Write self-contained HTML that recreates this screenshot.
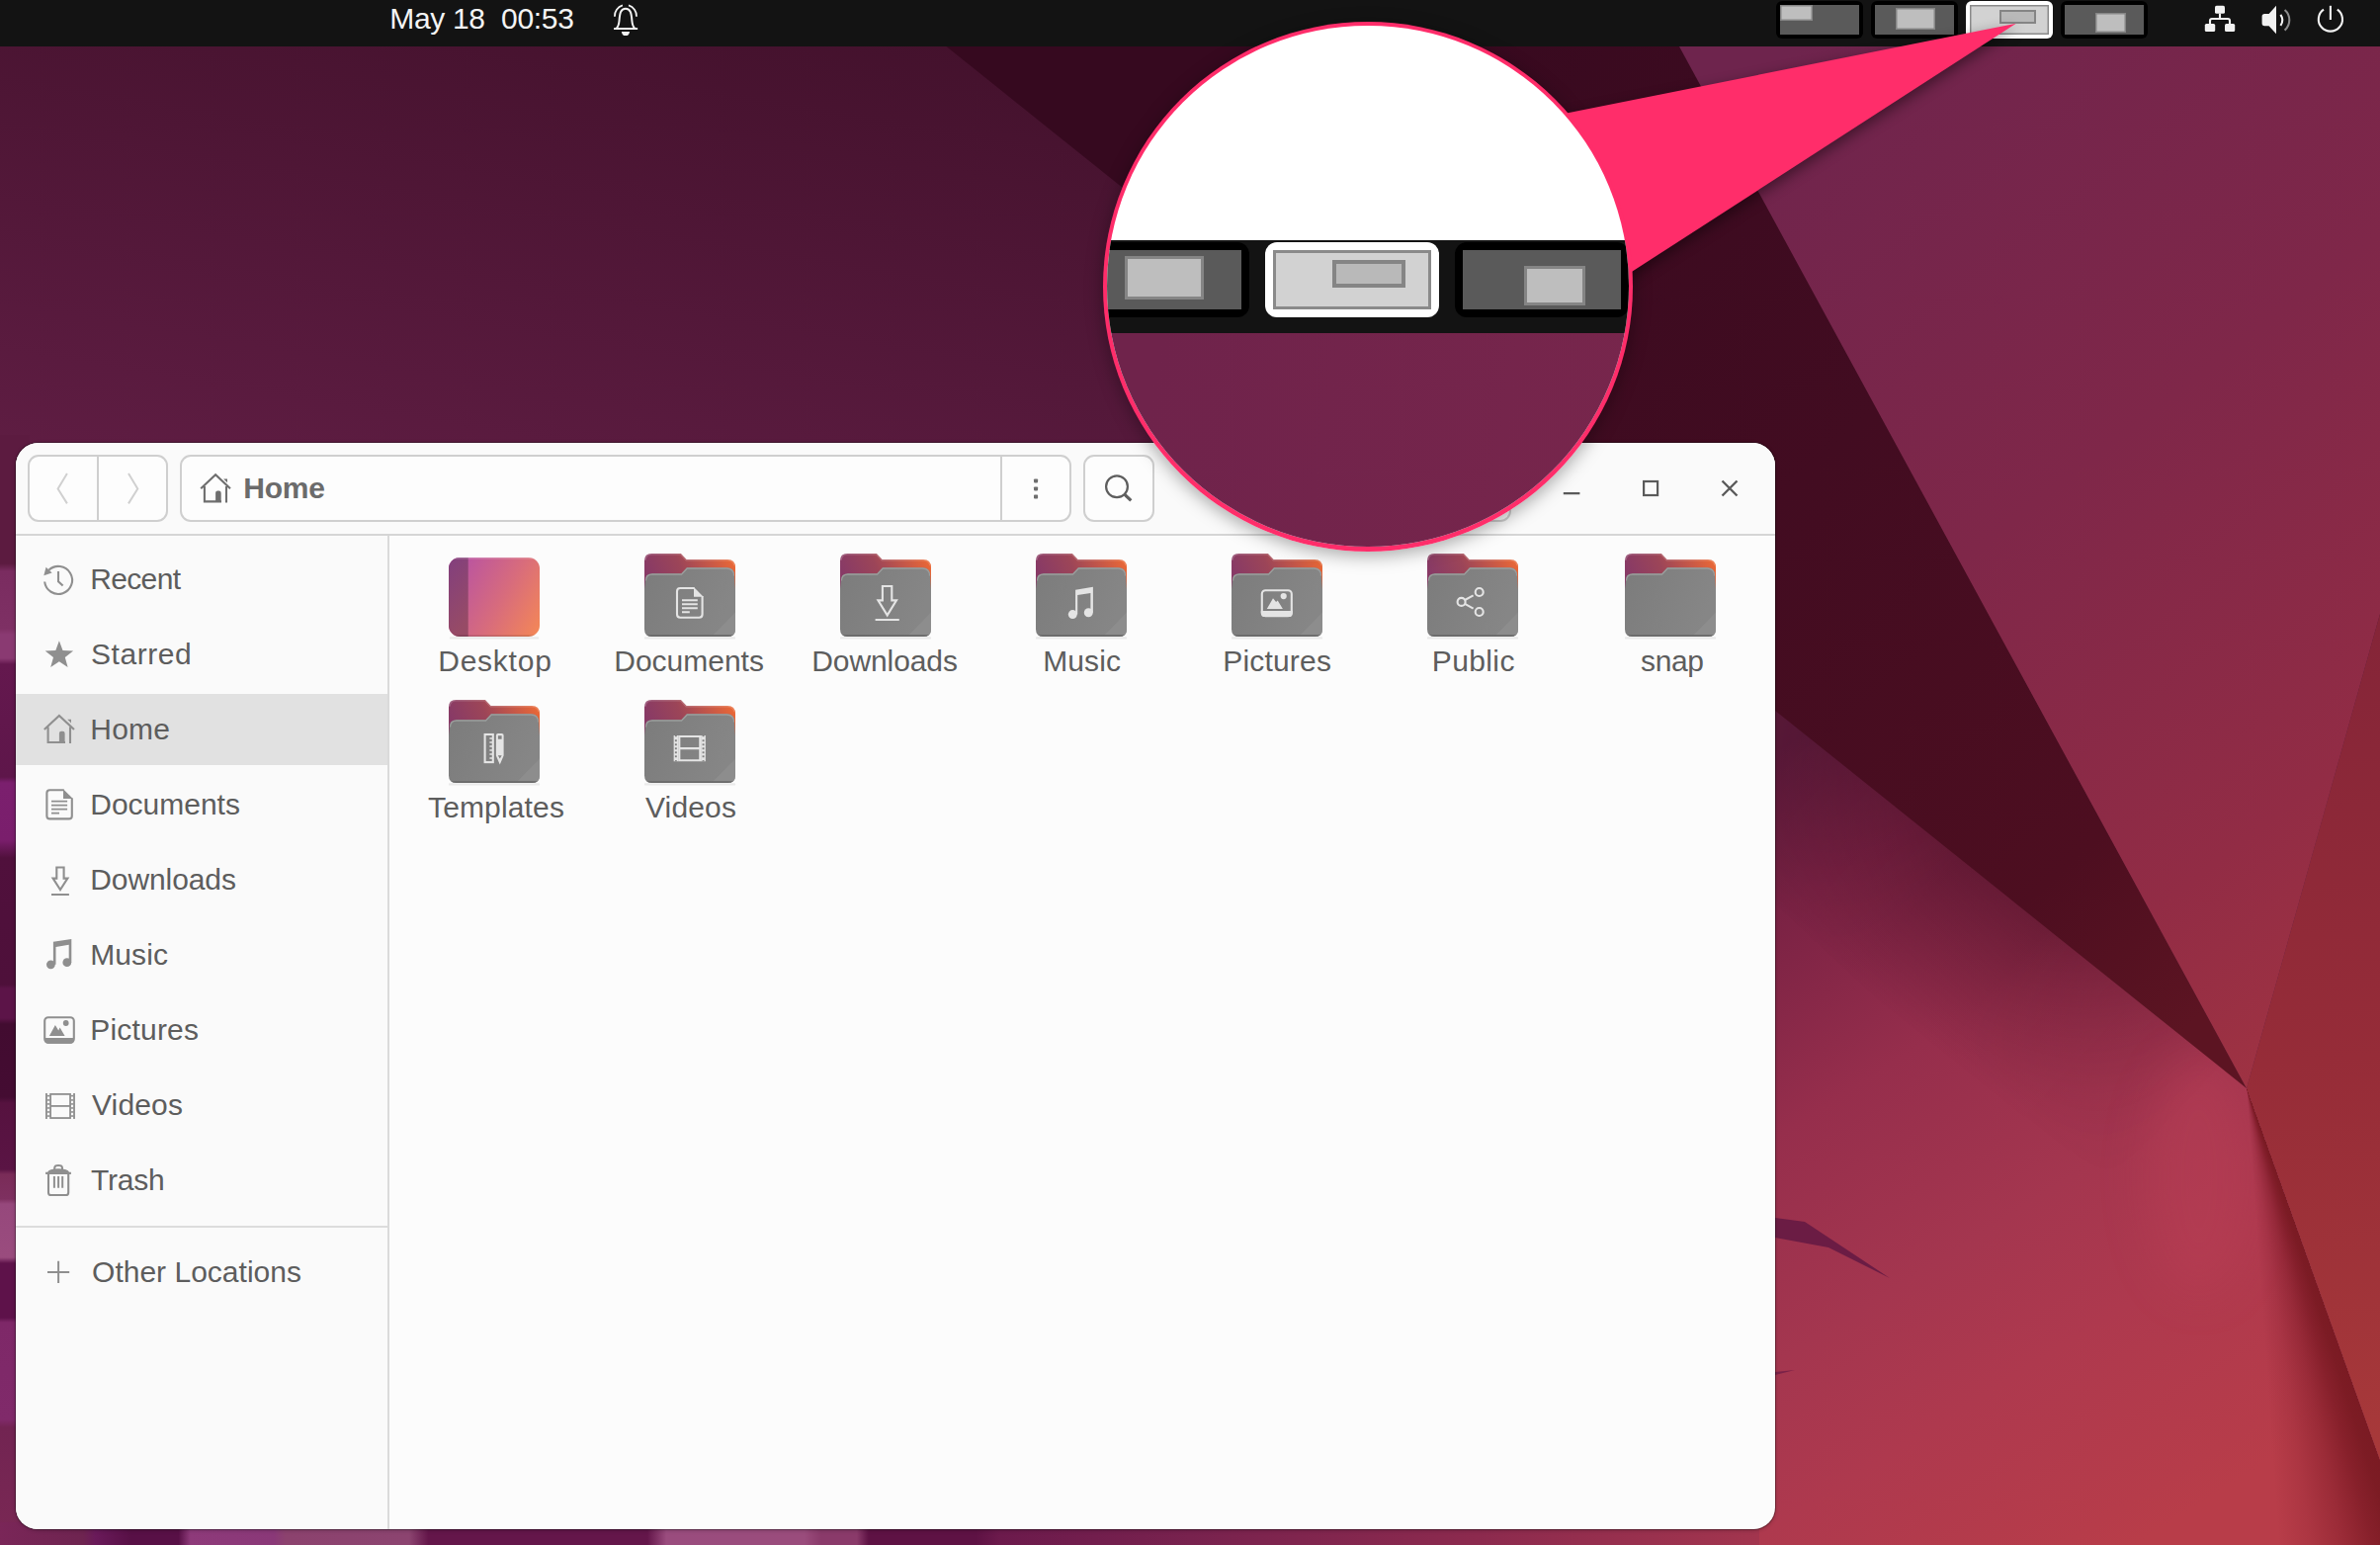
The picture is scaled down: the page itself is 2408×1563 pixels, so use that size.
<!DOCTYPE html>
<html><head><meta charset="utf-8"><title>Files - Home</title>
<style>
html,body{margin:0;padding:0}
body{width:2408px;height:1563px;position:relative;overflow:hidden;background:#4a1433;font-family:'Liberation Sans',sans-serif}
.abs{position:absolute;display:block}
.t{position:absolute;white-space:pre;line-height:1;font-family:'Liberation Sans',sans-serif}
#topbar{position:absolute;left:0;top:0;width:2408px;height:47px;background:#131313}
.ws{position:absolute;top:1px;width:87.7px;height:38px;border-radius:6px}
.wsi{position:absolute;left:3.9px;top:4px;width:80px;height:30px}
.wsw{position:absolute}
#win{position:absolute;left:16px;top:447.5px;width:1780px;height:1099.5px;border-radius:23px 23px 22px 22px;background:#fcfcfc;overflow:hidden;box-shadow:0 0 0 1px rgba(0,0,0,0.28),0 1px 4px rgba(0,0,0,0.25)}
#hdr{position:absolute;left:0;top:0;width:1780px;height:92.5px;background:#fafafa;border-bottom:2px solid #d5d5d5}
#side{position:absolute;left:0;top:94.5px;width:376px;height:1005px;background:#fafafa;border-right:2px solid #dadada}
.btn{position:absolute;box-sizing:border-box;border:2px solid #cfcfcf;border-radius:11px;background:#fdfdfd}
</style></head>
<body>

<svg class="abs" style="left:0;top:0" width="2408" height="1563" viewBox="0 0 2408 1563">
 <defs>
  <linearGradient id="w0" gradientUnits="userSpaceOnUse" x1="1100" y1="47" x2="1003" y2="627"><stop offset="0" stop-color="#43112c"/><stop offset="1" stop-color="#5f1d43"/></linearGradient>
  <linearGradient id="wdark" gradientUnits="userSpaceOnUse" x1="1300" y1="47" x2="2200" y2="1050"><stop offset="0" stop-color="#36091f"/><stop offset="0.5" stop-color="#420c21"/><stop offset="0.85" stop-color="#4d0e20"/><stop offset="1" stop-color="#5c1422"/></linearGradient>
  <linearGradient id="wlp" gradientUnits="userSpaceOnUse" x1="1750" y1="100" x2="2450" y2="1000"><stop offset="0" stop-color="#6e244d"/><stop offset="0.45" stop-color="#7f2749"/><stop offset="0.8" stop-color="#922c45"/><stop offset="1" stop-color="#a03342"/></linearGradient>
  <linearGradient id="wr" gradientUnits="userSpaceOnUse" x1="2340" y1="640" x2="2408" y2="1500"><stop offset="0" stop-color="#852538"/><stop offset="0.5" stop-color="#962c38"/><stop offset="1" stop-color="#a93a3a"/></linearGradient>
  <linearGradient id="wlow" gradientUnits="userSpaceOnUse" x1="1796" y1="760" x2="2260" y2="1500"><stop offset="0" stop-color="#5a1a3a"/><stop offset="0.16" stop-color="#7a2244"/><stop offset="0.378" stop-color="#962e4c"/><stop offset="0.6" stop-color="#a4364f"/><stop offset="0.76" stop-color="#ae394e"/><stop offset="0.956" stop-color="#b63c4a"/><stop offset="1" stop-color="#b83d49"/></linearGradient>
  <linearGradient id="wband" gradientUnits="userSpaceOnUse" x1="2290" y1="1400" x2="2400" y2="1370"><stop offset="0" stop-color="#7c1c24" stop-opacity="0"/><stop offset="1" stop-color="#7a1b23" stop-opacity="1"/></linearGradient>
  <linearGradient id="wleft" gradientUnits="userSpaceOnUse" x1="0" y1="440" x2="0" y2="1563"><stop offset="0.0000" stop-color="#5c1b40"/><stop offset="0.1158" stop-color="#5c1b40"/><stop offset="0.1229" stop-color="#7a2c60"/><stop offset="0.1745" stop-color="#7e3064"/><stop offset="0.1799" stop-color="#8a3a72"/><stop offset="0.2012" stop-color="#8a3a72"/><stop offset="0.2066" stop-color="#64184e"/><stop offset="0.3081" stop-color="#5e164a"/><stop offset="0.3134" stop-color="#7b1f6e"/><stop offset="0.3651" stop-color="#7a1e6c"/><stop offset="0.3811" stop-color="#50103c"/><stop offset="0.4951" stop-color="#4e103a"/><stop offset="0.4987" stop-color="#5c1448"/><stop offset="0.5254" stop-color="#5c1448"/><stop offset="0.5307" stop-color="#420c30"/><stop offset="0.5966" stop-color="#440c32"/><stop offset="0.6020" stop-color="#56123f"/><stop offset="0.6616" stop-color="#5a1444"/><stop offset="0.6661" stop-color="#7a2c58"/><stop offset="0.6883" stop-color="#7e3060"/><stop offset="0.6928" stop-color="#96487c"/><stop offset="0.7409" stop-color="#9a4c7e"/><stop offset="0.7462" stop-color="#5e124a"/><stop offset="0.7952" stop-color="#5e124a"/><stop offset="0.7996" stop-color="#7e2868"/><stop offset="0.8869" stop-color="#802a6a"/><stop offset="0.8940" stop-color="#722452"/><stop offset="1.0000" stop-color="#7a2854"/></linearGradient>
  <linearGradient id="wbot" gradientUnits="userSpaceOnUse" x1="0" y1="0" x2="2408" y2="0">
   <stop offset="0" stop-color="#7a2658"/><stop offset="0.035" stop-color="#6e2450"/><stop offset="0.04" stop-color="#6a1a5a"/><stop offset="0.055" stop-color="#581046"/><stop offset="0.075" stop-color="#581046"/><stop offset="0.08" stop-color="#8e3a7a"/><stop offset="0.115" stop-color="#8a3878"/><stop offset="0.12" stop-color="#8c426e"/><stop offset="0.172" stop-color="#8c4470"/><stop offset="0.18" stop-color="#64164a"/><stop offset="0.272" stop-color="#64164a"/><stop offset="0.28" stop-color="#9a4c7e"/><stop offset="0.338" stop-color="#9a4c7c"/><stop offset="0.345" stop-color="#8a3a6a"/><stop offset="0.36" stop-color="#8a3a6a"/><stop offset="0.365" stop-color="#5e1244"/><stop offset="0.41" stop-color="#5e1244"/><stop offset="0.42" stop-color="#6c1a4c"/><stop offset="0.5" stop-color="#78224e"/><stop offset="0.62" stop-color="#8c2a4e"/><stop offset="0.75" stop-color="#a4364e"/><stop offset="0.83" stop-color="#b23c4c"/><stop offset="0.89" stop-color="#be4248"/><stop offset="0.945" stop-color="#b03838"/><stop offset="0.975" stop-color="#8a2228"/><stop offset="1" stop-color="#7a1c22"/></linearGradient>
  <linearGradient id="wfold" gradientUnits="userSpaceOnUse" x1="2026" y1="870" x2="1907.25" y2="1018.2"><stop offset="0" stop-color="#3c0a1e" stop-opacity="0.5"/><stop offset="1" stop-color="#3c0a1e" stop-opacity="0"/></linearGradient>
  <linearGradient id="gmf" gradientUnits="userSpaceOnUse" x1="1780" y1="640" x2="2273" y2="1101"><stop offset="0" stop-color="#222"/><stop offset="0.12" stop-color="#444"/><stop offset="0.45" stop-color="#fff"/><stop offset="0.62" stop-color="#fff"/><stop offset="0.95" stop-color="#000"/></linearGradient>
  <mask id="mfold" maskUnits="userSpaceOnUse" x="1600" y="600" width="808" height="700"><rect x="1600" y="600" width="808" height="700" fill="url(#gmf)"/></mask>
  <clipPath id="cliplow"><polygon points="1780,640 2273,1101 2408,1477 2408,1563 1780,1563"/></clipPath>
  <filter id="blur8" x="-50%" y="-50%" width="200%" height="200%"><feGaussianBlur stdDeviation="5"/></filter>
  <filter id="blur20" x="-150%" y="-100%" width="400%" height="300%"><feGaussianBlur stdDeviation="22"/></filter>
 </defs>
 <rect x="0" y="0" width="2408" height="1563" fill="url(#w0)"/>
 <rect x="0" y="440" width="30" height="1123" fill="url(#wleft)"/>
 <!-- bottom strip (under window) -->
 <rect x="0" y="1540" width="1830" height="23" fill="url(#wbot)"/>
 <!-- lower right region -->
 <polygon points="1780,640 2273,1101 2408,1477 2408,1563 1780,1563" fill="url(#wlow)"/>
 <polygon points="1780,640 2273,1101 2154.25,1249.2 1661.25,788.2" fill="url(#wfold)" mask="url(#mfold)"/>
 <ellipse cx="2225" cy="1190" rx="55" ry="120" fill="#bc4056" opacity="0.4" filter="url(#blur20)"/>
 <!-- dark triangle -->
 <polygon points="930,25 1685,20 2273,1101" fill="url(#wdark)"/>
 <!-- light purple -->
 <polygon points="1699,47 1685,20 2408,20 2408,621 2273,1101" fill="url(#wlp)"/>
 <!-- right red -->
 <polygon points="2408,621 2408,1477 2273,1101" fill="url(#wr)"/>
 <!-- fins -->
 <polygon points="1796,1232 1826,1236 1912,1293 1850,1262 1796,1252" fill="#6b1c44"/>
 <polygon points="1796,1388 1816,1386 1796,1391" fill="#7a2248"/>
</svg>
<div class="abs" style="left:2200px;top:1090px;width:208px;height:473px;background:conic-gradient(from 0deg at 73px 11px, rgba(116,22,31,0) 0deg, rgba(116,22,31,0) 160.25deg, rgba(118,24,32,0.93) 160.3deg, rgba(118,24,32,0.9) 162deg, rgba(118,22,32,0.74) 164.5deg, rgba(120,22,34,0.46) 168deg, rgba(124,24,38,0.2) 172deg, rgba(124,24,38,0) 176deg, rgba(124,24,38,0) 360deg)"></div>

<svg width="0" height="0" style="position:absolute">
 <defs>
  <linearGradient id="fb" x1="0" y1="0.3" x2="1" y2="0.1">
   <stop offset="0" stop-color="#883a66"/><stop offset="0.38" stop-color="#9c4558"/><stop offset="0.7" stop-color="#c65848"/><stop offset="1" stop-color="#ee6a34"/>
  </linearGradient>
  <linearGradient id="ff" x1="0" y1="0" x2="1" y2="0.3">
   <stop offset="0" stop-color="#7c7c7c"/><stop offset="1" stop-color="#868686"/>
  </linearGradient>
  <linearGradient id="dk1" gradientUnits="userSpaceOnUse" x1="19.7" y1="4" x2="108.9" y2="53.5">
   <stop offset="0" stop-color="#bb559f"/><stop offset="0.5" stop-color="#d86c7c"/><stop offset="1" stop-color="#f58855"/>
  </linearGradient>
  <linearGradient id="dk2" x1="0" y1="0" x2="0.3" y2="1">
   <stop offset="0" stop-color="#823f7e"/><stop offset="1" stop-color="#974b66"/>
  </linearGradient>
  <clipPath id="fclip"><path d="M0 36 L0.9 27.3 Q0.9 20.3 7.9 20.3 L37.2 20.3 L42.9 14.2 L83.2 14.2 Q91.1 14.2 91.1 22.2 L92 36 V76.6 Q92 84 84.6 84 H7.4 Q0 84 0 76.6 Z"/></clipPath>
  <clipPath id="dclip"><rect x="0" y="4" width="92" height="80" rx="11.5" ry="11"/></clipPath>
  <g id="folder">
   <path d="M1 85.4 H91" stroke="#000" stroke-opacity="0.07" stroke-width="2.4" stroke-linecap="round"/>
   <path d="M0 7.4 Q0 0 7.4 0 L36.9 0 L42.6 6 L84 6 Q92 6 92 14 V44 H0 Z" fill="url(#fb)"/>
   <path d="M1 6.6 Q1.6 0.8 7.4 0.8 L36.6 0.8 L42.3 6.8 L84 6.8 Q90 6.8 91 12" fill="none" stroke="#fff" stroke-opacity="0.18" stroke-width="1.4"/>
   <g clip-path="url(#fclip)">
    <rect x="0" y="14" width="92" height="70" fill="url(#ff)"/>
    <path d="M68 84 L92 59.4 V84 Z" fill="#8d8d8d"/>
    <path d="M0 83.4 H92" stroke="#686868" stroke-width="2.4"/>
    <path d="M1.2 27.6 Q1.2 20.9 7.9 20.9 L37.4 20.9 L43.1 14.8 L83.2 14.8 Q90.8 14.8 90.8 22.4" fill="none" stroke="#9b9d9c" stroke-width="1.8"/>
   </g>
  </g>
 </defs>
</svg>
<div id="topbar">
<span class="t" style="left:394.24px;top:4.30px;font-size:30px;font-weight:400;color:#f4f4f4;letter-spacing:-0.340px">May 18</span>
<span class="t" style="left:507.10px;top:4.30px;font-size:30px;font-weight:400;color:#f4f4f4;letter-spacing:-0.310px">00:53</span>

<svg class="abs" style="left:616px;top:0" width="36" height="42" viewBox="616 0 36 42">
 <path d="M623.8 28.4 Q626 26.4 626.5 21 Q627 14.6 628 12.2 Q629.5 8.85 632.95 8.85 Q636.4 8.85 637.9 12.2 Q638.9 14.6 639.4 21 Q639.9 26.4 642.1 28.4" fill="none" stroke="#f2f2f2" stroke-width="2"/>
 <rect x="621" y="28.05" width="24.2" height="2.05" rx="0.6" fill="#f2f2f2"/>
 <path d="M621.9 16.7 A11.1 11.1 0 0 1 629.9 5.4" fill="none" stroke="#f2f2f2" stroke-width="1.8"/>
 <path d="M644 16.7 A11.1 11.1 0 0 0 636 5.4" fill="none" stroke="#f2f2f2" stroke-width="1.8"/>
 <path d="M628.8 31.9 H637.1 Q636.5 36.1 632.95 36.1 Q629.4 36.1 628.8 31.9 Z" fill="#f2f2f2"/>
</svg>
<div class="ws" style="left:1797.1px;background:#000"><div class="wsi" style="background:#5a5a5a"></div><div class="wsw" style="left:3.900000000000091px;top:4px;width:33px;height:16px;background:#bebebe;box-shadow:inset 0 0 0 1.5px #858585"></div></div>
<div class="ws" style="left:1893.1px;background:#000"><div class="wsi" style="background:#5a5a5a"></div><div class="wsw" style="left:24.90000000000009px;top:7px;width:40px;height:21.6px;background:#bebebe;box-shadow:inset 0 0 0 1.5px #858585"></div></div>
<div class="ws" style="left:1989.1px;background:#fff"><div class="wsi" style="background:#d2d2d2;box-shadow:inset 0 0 0 1.5px #8a8a8a"></div><div class="wsw" style="left:33.90000000000009px;top:9px;width:37px;height:14px;background:#b9b9b9;box-shadow:inset 0 0 0 2px #858585"></div></div>
<div class="ws" style="left:2085.1px;background:#000"><div class="wsi" style="background:#5a5a5a"></div><div class="wsw" style="left:34.90000000000009px;top:12px;width:31px;height:20px;background:#bebebe;box-shadow:inset 0 0 0 1.5px #858585"></div></div>

<svg class="abs" style="left:2226px;top:0" width="160" height="47" viewBox="2226 0 160 47">
 <g fill="#f2f2f2">
  <rect x="2241" y="5.8" width="10" height="8" rx="1.6"/>
  <rect x="2230.8" y="24" width="10.4" height="8" rx="1.6"/>
  <rect x="2251" y="24" width="10.2" height="8" rx="1.6"/>
 </g>
 <path d="M2246 13.5 V19 M2236 24.5 V21 Q2236 19 2238 19 H2254 Q2256 19 2256 21 V24.5" fill="none" stroke="#f2f2f2" stroke-width="2.1"/>
 <path d="M2303 5.8 L2295.6 14 H2291.2 Q2288.6 14 2288.6 16.6 V23.6 Q2288.6 26.2 2291.2 26.2 H2295.6 L2303 34.2 Z" fill="#f2f2f2"/>
 <path d="M2307.4 14.9 A9.5 9.5 0 0 1 2307.4 25.9" fill="none" stroke="#f2f2f2" stroke-width="2.1"/>
 <path d="M2311.6 10 A13.64 13.64 0 0 1 2311.6 30.6" fill="none" stroke="#8c8c8c" stroke-width="2.1"/>
 <path d="M2351.0 9.6 A12.1 12.1 0 1 0 2364.8 9.6" fill="none" stroke="#f2f2f2" stroke-width="2.1"/>
 <path d="M2357.9 5.8 V20" stroke="#f2f2f2" stroke-width="2.1"/>
</svg>
</div>
<div id="win">
 <div id="hdr">
  <div class="btn" style="left:12.3px;top:12.5px;width:141.4px;height:68px"></div>
  <div class="abs" style="left:82px;top:14.5px;width:2px;height:64px;background:#cfcfcf"></div>
  <div class="btn" style="left:166.3px;top:12.5px;width:901.6px;height:68px"></div>
  <div class="abs" style="left:996px;top:14.5px;width:2px;height:64px;background:#cfcfcf"></div>
  <div class="btn" style="left:1080.1px;top:12.5px;width:72px;height:68px"></div>
  <div class="btn" style="left:1300px;top:12.5px;width:213px;height:68px"></div>
  <svg class="abs" style="left:0;top:0" width="1780" height="92" viewBox="16 447.5 1780 92">
   <g fill="none" stroke="#d0d0d0" stroke-width="2"><path d="M67.9 478.6 L58.6 494 L67.9 508.9"/><path d="M130 478.6 L139.3 494 L130 508.9"/></g>
   <g fill="none" stroke="#6e6e6e" stroke-width="2.1"><path d="M203.2 493.8 L218.1 479.8 L233 493.8 M206.9 491.6 V506.9 H224 M229 491.6 V507.9"/></g>
   <g fill="#6e6e6e"><path d="M218.1 507.4 V498.2 Q218.1 496 220.3 496 H221.5 Q223.7 496 223.7 498.2 V507.4 Z"/><path d="M226.2 484 H230 V487.8 Z"/>
    <rect x="1046" y="484" width="4.1" height="3.9" rx="0.8"/><rect x="1046" y="492" width="4.1" height="3.9" rx="0.8"/><rect x="1046" y="500.1" width="4.1" height="3.9" rx="0.8"/></g>
   <g fill="none" stroke="#5e5e5e" stroke-width="2.2"><circle cx="1130" cy="491.8" r="10.9"/><path d="M1138 499.8 L1144.3 505.8" stroke-width="3.2"/></g>
   <g fill="none" stroke="#5a5a5a" stroke-width="2.2"><path d="M1581.8 498.7 H1598.4" stroke-width="2.3"/><rect x="1663.1" y="486.5" width="14" height="14"/><path d="M1742.5 486 L1757.5 501 M1757.5 486 L1742.5 501" stroke-width="2.4"/></g>
  </svg>
  <span class="t" style="left:230.19px;top:31.11px;font-size:30px;font-weight:700;color:#6b6b6b;letter-spacing:-0.206px">Home</span>
 </div>
 <div id="side">
  <div class="abs" style="left:0;top:160px;width:376px;height:72px;background:#e1e1e1"></div>
  <div class="abs" style="left:0;top:697.8px;width:376px;height:2px;background:#dcdcdc"></div>
 </div>
 <div class="abs" style="left:-16px;top:-447.5px;width:2408px;height:1563px">
 
<svg class="abs" style="left:40px;top:560px" width="40" height="750" viewBox="40 560 40 750">
 <g fill="none" stroke="#8f8f8f" stroke-width="2.1">
  <!-- recent -->
  <path d="M45.15 588.5 A14 14 0 1 0 49.4 576.8"/>
  <path d="M59 578 V588.2 L63.6 592.6"/>
  <!-- home -->
  <path d="M44.8 738 L59.9 724 L75 738 M48.6 735.4 V751 H66 M71 735.4 V752"/>
  <!-- documents -->
  <path d="M64.6 799.2 H50.4 Q47.4 799.2 47.4 802.2 V825.4 Q47.4 828.4 50.4 828.4 H69.8 Q72.8 828.4 72.8 825.4 V807.4"/>
  <path d="M52 810.7 H68.1 M52 814.7 H68.1 M52 818.7 H68.1 M52 822.7 H60" stroke-width="1.8"/>
  <!-- downloads -->
  <path d="M57.3 877.5 H64.6 V888.6 H68.4 L61 900 L53.6 888.6 H57.3 Z M52 905 H69.9"/>
  <!-- pictures -->
  <rect x="45.2" y="1029.2" width="29.6" height="25.5" rx="3.6"/>
  <!-- videos -->
  <rect x="51.1" y="1106.9" width="19.94" height="24.14" stroke-width="1.8"/><path d="M51 1118.93 H71.1" stroke-width="1.8"/>
  <!-- trash -->
  <path d="M55.2 1186 V1181.4 Q55.2 1179 59.1 1179 Q63 1179 63 1181.4 V1186" stroke-width="2"/>
  <path d="M49 1188 V1206.4 Q49 1209 51.6 1209 H66.6 Q69.2 1209 69.2 1206.4 V1188"/>
  <path d="M54.9 1190 V1201.8 M59.1 1190 V1201.8 M63.2 1190 V1201.8" stroke-width="2"/>
  <!-- plus -->
  <path d="M48 1286.9 H70.2 M59.1 1275.8 V1298" stroke-width="2"/>
 </g>
 <g fill="#8f8f8f">
  <path d="M44.3 582.2 L46.6 573.8 L52.6 579.6 Z"/>
  <!-- star -->
  <path d="M59.9 648.2 L63.5 658 L74.1 658.4 L65.8 665 L68.6 675 L59.9 669.2 L51.2 675 L54 665 L45.7 658.4 L56.3 658 Z"/>
  <!-- home door/chimney -->
  <path d="M59.9 751.4 V742 Q59.9 739.8 62.1 739.8 H63.4 Q65.6 739.8 65.6 742 V751.4 Z"/>
  <path d="M68.2 727.8 H72 V731.6 Z"/>
  <!-- doc fold -->
  <path d="M64 798.2 L73.8 808 H64 Z"/>
  <!-- music -->
  <circle cx="51.4" cy="975.8" r="4.4"/><circle cx="67.8" cy="973.7" r="4.4"/>
  <path d="M53.9 952.8 L72.3 949.9 V973.7 H69.7 V955.8 L56.5 958 V975.8 H53.9 Z"/>
  <!-- pictures -->
  <path d="M45.2 1050 H74.8 V1052 Q74.8 1055.7 71 1055.7 H49 Q45.2 1055.7 45.2 1052 Z"/>
  <path d="M49.9 1047.9 L55.9 1037 L59.2 1042.4 L60.6 1039.6 L65.6 1047.9 Z"/>
  <circle cx="66.7" cy="1035" r="2.9"/>
  <!-- trash lid -->
  <path d="M46.1 1185.8 H48.2 Q49.4 1182.2 59.1 1182.2 Q68.8 1182.2 70 1185.8 H71.9 V1188 H46.1 Z"/>
 </g>
 <!-- film strips -->
 <g fill="#8f8f8f"><rect x="46" y="1106" width="1.86" height="25.94"/><rect x="74.1" y="1106" width="1.84" height="25.94"/><rect x="47.6" y="1107.86" width="2.9" height="1.56"/><rect x="71.7" y="1107.86" width="2.7" height="1.56"/><rect x="47.6" y="1112.12" width="2.9" height="1.56"/><rect x="71.7" y="1112.12" width="2.7" height="1.56"/><rect x="47.6" y="1116.12" width="2.9" height="1.56"/><rect x="71.7" y="1116.12" width="2.7" height="1.56"/><rect x="47.6" y="1120.17" width="2.9" height="1.56"/><rect x="71.7" y="1120.17" width="2.7" height="1.56"/><rect x="47.6" y="1124.17" width="2.9" height="1.56"/><rect x="71.7" y="1124.17" width="2.7" height="1.56"/><rect x="47.6" y="1128.25" width="2.9" height="1.56"/><rect x="71.7" y="1128.25" width="2.7" height="1.56"/></g>
</svg>
 <span class="t" style="left:91.25px;top:570.61px;font-size:30px;font-weight:400;color:#5d5d5d;letter-spacing:-0.659px">Recent</span>
<span class="t" style="left:92.06px;top:646.61px;font-size:30px;font-weight:400;color:#5d5d5d;letter-spacing:0.560px">Starred</span>
<span class="t" style="left:91.25px;top:722.61px;font-size:30px;font-weight:400;color:#5d5d5d;letter-spacing:0.216px">Home</span>
<span class="t" style="left:91.25px;top:798.61px;font-size:30px;font-weight:400;color:#5d5d5d;letter-spacing:-0.006px">Documents</span>
<span class="t" style="left:91.25px;top:874.61px;font-size:30px;font-weight:400;color:#5d5d5d;letter-spacing:-0.091px">Downloads</span>
<span class="t" style="left:91.25px;top:950.61px;font-size:30px;font-weight:400;color:#5d5d5d;letter-spacing:0.099px">Music</span>
<span class="t" style="left:91.25px;top:1026.61px;font-size:30px;font-weight:400;color:#5d5d5d;letter-spacing:0.188px">Pictures</span>
<span class="t" style="left:92.96px;top:1102.61px;font-size:30px;font-weight:400;color:#5d5d5d;letter-spacing:0.153px">Videos</span>
<span class="t" style="left:92.06px;top:1178.61px;font-size:30px;font-weight:400;color:#5d5d5d;letter-spacing:-0.205px">Trash</span>
<span class="t" style="left:93.05px;top:1272.11px;font-size:30px;font-weight:400;color:#5d5d5d;letter-spacing:0.007px">Other Locations</span>
 <svg class="abs" style="left:454.25px;top:560px" width="94" height="88" viewBox="0 0 94 88"><path d="M2 85.4 H90" stroke="#000" stroke-opacity="0.07" stroke-width="2.4" stroke-linecap="round"/><g clip-path="url(#dclip)"><rect x="0" y="4" width="92" height="80" fill="url(#dk1)"/><rect x="0" y="4" width="19.7" height="80" fill="url(#dk2)"/><path d="M0 4.6 H92" stroke="#fff" stroke-opacity="0.22" stroke-width="1.6"/><path d="M0 83.4 H92" stroke="#000" stroke-opacity="0.14" stroke-width="1.6"/></g></svg><svg class="abs" style="left:652.25px;top:560px" width="94" height="88" viewBox="0 0 94 88"><use href="#folder"/><g fill="none" stroke="#e4e4e4" stroke-width="2.1"><path d="M50.6 35 H36.2 Q33 35 33 38.2 V61.6 Q33 64.8 36.2 64.8 H55.4 Q58.6 64.8 58.6 61.6 V43"/><path d="M38 47.2 H53.8 M38 51.2 H53.8 M38 55.2 H53.8 M38 59.2 H45.8"/></g><path d="M50 34 L59.7 43.7 H50 Z" fill="#e4e4e4"/></svg><svg class="abs" style="left:850.3px;top:560px" width="94" height="88" viewBox="0 0 94 88"><use href="#folder"/><g fill="none" stroke="#e4e4e4" stroke-width="2.1"><path d="M42.9 33 H52.3 V47.4 H57 L47.7 62.4 L38.4 47.4 H42.9 Z M35.6 67 H59.8"/></g></svg><svg class="abs" style="left:1048.25px;top:560px" width="94" height="88" viewBox="0 0 94 88"><use href="#folder"/><g fill="#e4e4e4"><circle cx="37.3" cy="61.6" r="4.5"/><circle cx="53.3" cy="59.8" r="4.5"/><path d="M40.1 36.7 L57.9 33.8 V59.8 H55.4 V39.9 L42.2 42.1 V61.6 H40.1 Z"/></g></svg><svg class="abs" style="left:1246.25px;top:560px" width="94" height="88" viewBox="0 0 94 88"><use href="#folder"/><rect x="30.8" y="37.2" width="30" height="25.9" rx="3.6" fill="none" stroke="#e4e4e4" stroke-width="2.1"/><g fill="#e4e4e4"><path d="M29.8 58 H61.8 V60.4 Q61.8 64.1 58 64.1 H33.6 Q29.8 64.1 29.8 60.4 Z"/><path d="M35.8 55.9 L42 45.2 L45.1 49.1 L46.7 47.4 L51.9 55.9 Z"/><circle cx="52.7" cy="43.1" r="3.1"/></g></svg><svg class="abs" style="left:1444.25px;top:560px" width="94" height="88" viewBox="0 0 94 88"><use href="#folder"/><g fill="none" stroke="#e4e4e4" stroke-width="2.1"><circle cx="52.7" cy="39" r="4"/><circle cx="34.6" cy="48.9" r="4"/><circle cx="52.7" cy="59" r="4"/><path d="M38.1 47 L46.6 42.4 M38.1 50.8 L46.6 55.6"/></g></svg><svg class="abs" style="left:1644.4px;top:560px" width="94" height="88" viewBox="0 0 94 88"><use href="#folder"/></svg><svg class="abs" style="left:454.25px;top:708px" width="94" height="88" viewBox="0 0 94 88"><use href="#folder"/><rect x="36.6" y="35" width="8.2" height="28.1" fill="none" stroke="#e4e4e4" stroke-width="2.1"/><path d="M44 39 H41.4 M44 43 H41.4 M44 47 H41.4 M44 51 H41.4 M44 55 H41.4 M44 59 H41.4" stroke="#e4e4e4" stroke-width="1.4"/><path d="M47.9 36 Q47.9 34 49.9 34 H53.6 Q55.6 34 55.6 36 V56.6 L51.75 65.6 L47.9 56.6 Z M49.9 36.3 V39.7 H53.6 V36.3 Z M49.8 56.3 H53.7 L51.75 59.6 Z" fill="#e4e4e4" fill-rule="evenodd"/></svg><svg class="abs" style="left:652.25px;top:708px" width="94" height="88" viewBox="0 0 94 88"><use href="#folder"/><g fill="none" stroke="#e4e4e4"><path d="M34.4 37.05 H57.2 M34.4 49.15 H57.2 M34.4 61.25 H57.2 M35.3 36 V62.3 M56.3 36 V62.3" stroke-width="2.1"/><path d="M32 36 V62.3 M59.5 36 V62.3" stroke-width="4.7"/></g><g fill="#818181"><rect x="30.9" y="40.3" width="1.9" height="1.9"/><rect x="30.9" y="44.3" width="1.9" height="1.9"/><rect x="30.9" y="48.3" width="1.9" height="1.9"/><rect x="30.9" y="52.3" width="1.9" height="1.9"/><rect x="30.9" y="56.3" width="1.9" height="1.9"/><rect x="58.6" y="40.3" width="1.9" height="1.9"/><rect x="58.6" y="44.3" width="1.9" height="1.9"/><rect x="58.6" y="48.3" width="1.9" height="1.9"/><rect x="58.6" y="52.3" width="1.9" height="1.9"/><rect x="58.6" y="56.3" width="1.9" height="1.9"/><rect x="30.9" y="36" width="1.9" height="1.2"/><rect x="58.6" y="36" width="1.9" height="1.2"/><rect x="30.9" y="61.1" width="1.9" height="1.2"/><rect x="58.6" y="61.1" width="1.9" height="1.2"/></g></svg>
 <span class="t" style="left:443.22px;top:654.21px;font-size:30px;font-weight:400;color:#5d5d5d;letter-spacing:0.763px">Desktop</span>
<span class="t" style="left:621.22px;top:654.21px;font-size:30px;font-weight:400;color:#5d5d5d;letter-spacing:-0.002px">Documents</span>
<span class="t" style="left:821.23px;top:654.21px;font-size:30px;font-weight:400;color:#5d5d5d;letter-spacing:-0.090px">Downloads</span>
<span class="t" style="left:1055.21px;top:654.21px;font-size:30px;font-weight:400;color:#5d5d5d;letter-spacing:0.104px">Music</span>
<span class="t" style="left:1237.22px;top:654.21px;font-size:30px;font-weight:400;color:#5d5d5d;letter-spacing:0.189px">Pictures</span>
<span class="t" style="left:1448.76px;top:654.21px;font-size:30px;font-weight:400;color:#5d5d5d;letter-spacing:0.390px">Public</span>
<span class="t" style="left:1660.06px;top:654.21px;font-size:30px;font-weight:400;color:#5d5d5d;letter-spacing:-0.421px">snap</span>
<span class="t" style="left:433.00px;top:802.21px;font-size:30px;font-weight:400;color:#5d5d5d;letter-spacing:0.146px">Templates</span>
<span class="t" style="left:653.00px;top:802.21px;font-size:30px;font-weight:400;color:#5d5d5d;letter-spacing:0.143px">Videos</span>
 </div>
</div>
<div class="abs" style="left:1116px;top:21.5px;width:536px;height:536px;border-radius:50%;box-shadow:0 4px 18px rgba(0,0,0,0.34)"></div>
<svg class="abs" style="left:1500px;top:0;filter:drop-shadow(0 5px 7px rgba(0,0,0,0.45))" width="600" height="340" viewBox="1500 0 600 340"><polygon points="2039.8,23.8 1580,115.4 1640,282" fill="#ff2d6a"/></svg>
<div class="abs" style="left:1116px;top:21.5px;width:536px;height:536px;border-radius:50%;background:#ff2d6a"></div>
<div id="lens" class="abs" style="left:1120.4px;top:25.9px;width:527.2px;height:527.2px;border-radius:50%;overflow:hidden;background:#ff2d6a">
<div class="abs" style="left:-4.4px;top:-4.4px;width:536px;height:536px">
<div style="position:absolute;left:0;top:0;width:536px;height:536px;background:#fff"></div>
<div style="position:absolute;left:-3814px;top:221.5px;width:2408px;height:700px;transform-origin:0 0;transform:scale(2)">
 <div style="position:absolute;left:0;top:0;width:2408px;height:47px;background:#131313"><div class="ws" style="left:1797.1px;background:#000"><div class="wsi" style="background:#5a5a5a"></div><div class="wsw" style="left:3.900000000000091px;top:4px;width:33px;height:16px;background:#bebebe;box-shadow:inset 0 0 0 1.5px #858585"></div></div>
<div class="ws" style="left:1893.1px;background:#000"><div class="wsi" style="background:#5a5a5a"></div><div class="wsw" style="left:24.90000000000009px;top:7px;width:40px;height:21.6px;background:#bebebe;box-shadow:inset 0 0 0 1.5px #858585"></div></div>
<div class="ws" style="left:1989.1px;background:#fff"><div class="wsi" style="background:#d2d2d2;box-shadow:inset 0 0 0 1.5px #8a8a8a"></div><div class="wsw" style="left:33.90000000000009px;top:9px;width:37px;height:14px;background:#b9b9b9;box-shadow:inset 0 0 0 2px #858585"></div></div>
<div class="ws" style="left:2085.1px;background:#000"><div class="wsi" style="background:#5a5a5a"></div><div class="wsw" style="left:34.90000000000009px;top:12px;width:31px;height:20px;background:#bebebe;box-shadow:inset 0 0 0 1.5px #858585"></div></div></div>
 <div style="position:absolute;left:0;top:47px;width:2408px;height:140px;background:linear-gradient(100deg,#6f234b 1907px,#78264c 2175px)"></div>
</div>
</div>
</div>
</body></html>
